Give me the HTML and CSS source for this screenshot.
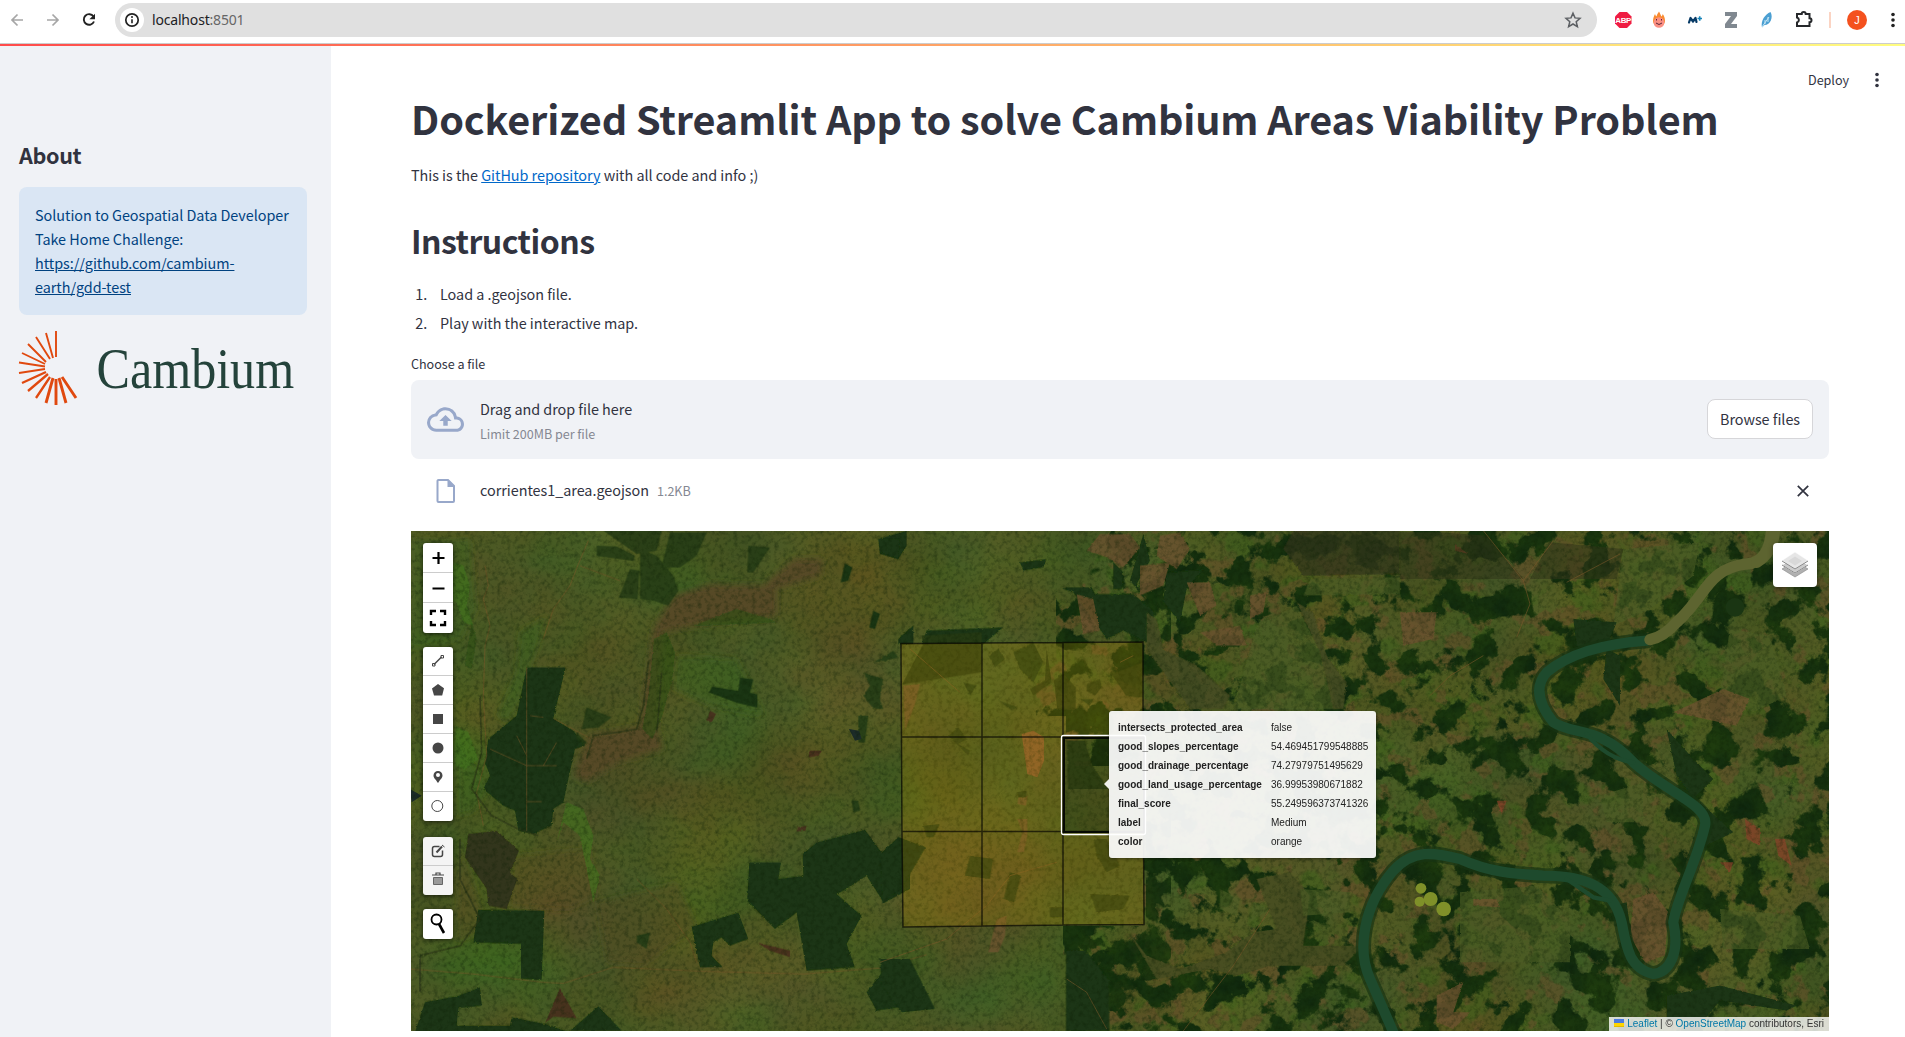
FILE: index.html
```html
<!DOCTYPE html>
<html lang="en">
<head>
<meta charset="utf-8">
<title>Cambium Areas Viability</title>
<link rel="stylesheet" href="styles.css">
</head>
<body>
<header class="browser">
  <svg class="nav-icons" width="108" height="40" viewBox="0 0 108 40">
    <g fill="none" stroke="#a6a6a6" stroke-width="1.7"><path d="M23 20H12M17.500 14.500L12 20l5.500 5.500M47 20h11M52.500 14.500L58 20l-5.500 5.500"/></g>
    <path d="M93.500 16.500A5.300 5.300 0 1 0 94 21.500" fill="none" stroke="#222" stroke-width="1.9"/><path d="M95 13.700v5.600h-5.600z" fill="#222"/>
  </svg>
  <div class="address">
    <span class="site-info"><svg width="16" height="16" viewBox="0 0 16 16"><circle cx="8" cy="8" r="6.200" fill="none" stroke="#222" stroke-width="1.700"/><path d="M8 7.200v4" stroke="#222" stroke-width="1.600"/><circle cx="8" cy="5" r="1" fill="#222"/></svg></span>
    <span class="url">localhost<i>:8501</i></span>
    <svg class="star" width="18" height="18" viewBox="0 0 18 18"><path d="M9 2.200l2 4.700 5 .4-3.800 3.400 1.200 5L9 13l-4.400 2.700 1.200-5L2 7.300l5-.4z" fill="none" stroke="#5c5f63" stroke-width="1.500"/></svg>
  </div>
  <svg class="extensions" width="301" height="40" viewBox="1604 0 301 40">
    <path d="M1619.500 12h7.500l4.500 4.500v7l-4.500 4.500h-7.500l-4.500-4.500v-7z" fill="#ef1c43"/>
    <text class="abp" x="1623.200" y="23" text-anchor="middle">ABP</text>
    <path d="M1653 21c0-3 1-5 2-7 .5 1.500 1 2 1.500 2.500.5-2 1.500-3.500 2.500-5 1 2 1.500 3 2.500 5 .8-.8 1-1.500 1.200-2.500 1.500 2 2.300 4 2.300 7a6 6 0 0 1-12 0z" fill="#f98a32"/>
    <circle cx="1659" cy="22.500" r="5.300" fill="#fb8f83"/><path d="M1656 23q3 3 6 0M1656.500 19v1.500M1661.500 19v1.500" stroke="#5a2638" fill="none"/>
    <path d="M1689 22.500l1.500-4.500 2.500 3.500 2.500-3.500 1 4" fill="none" stroke="#073a66" stroke-width="2.200" stroke-linejoin="round" stroke-linecap="round"/><path d="M1697.500 18.500h4.500M1699.700 16.300v4.500" stroke="#1583b8" stroke-width="1.600"/>
    <path d="M1725 12h12v4l-6 8h6v4h-12v-4l6-8h-6z" fill="#808890"/>
    <path d="M1762 27.500c-1.500-7 3-13 8.500-15.500 3 5 0 13-6 13z" fill="#4b9fd2"/><path d="M1762 27l7-10M1765 20v4M1768 17v5" stroke="#c5e6f4"/>
    <path d="M1798 14h3.700a2 2 0 0 1 4 0h3.800v4.200a2 2 0 0 1 0 4V26H1797v-3.500a2.600 2.600 0 0 0 0-5V14z" fill="none" stroke="#26282b" stroke-width="2"/>
    <path d="M1830 12v16" stroke="#fbd4c3" stroke-width="2"/>
    <circle cx="1857" cy="20" r="10" fill="#f4511e"/><text class="avatar-letter" x="1857" y="24.200" text-anchor="middle">J</text>
    <g fill="#222"><circle cx="1893" cy="14.500" r="1.800"/><circle cx="1893" cy="20" r="1.800"/><circle cx="1893" cy="25.500" r="1.800"/></g>
  </svg>
</header>
<div class="decoration"></div>
<div class="app">
  <aside class="sidebar">
    <h3>About</h3>
    <div class="info">Solution to Geospatial Data Developer Take Home Challenge: <a>https://github.com/cambium-earth/gdd-test</a></div>
    <svg class="logo" width="288" height="76" viewBox="0 0 288 76">
      <g stroke="#e0490f" stroke-width="1.900">
        <path d="M37 1v26M27 3l7 25M17 7l14 22M9 14l18 18M3 23l23 11M0 32.500l26 4M0 43l26-4" />
        <path stroke-width="2.300" d="M3 53l24-11M9 61l20-17M17 68l14-21"/>
        <path stroke-width="2.900" d="M27 73l7-25M37 75V49M47 73l-7-25M57 68L43 47"/>
      </g>
      <text transform="translate(77.500 58) scale(.895 1)">Cambium</text>
    </svg>
  </aside>
  <main class="main">
    <div class="toolbar"><span>Deploy</span><svg width="6" height="16" viewBox="0 0 6 16" fill="#31333f"><circle cx="3" cy="2.500" r="1.800"/><circle cx="3" cy="8" r="1.800"/><circle cx="3" cy="13.500" r="1.800"/></svg></div>
    <h1>Dockerized Streamlit App to solve Cambium Areas Viability Problem</h1>
    <p class="lead">This is the <a>GitHub repository</a> with all code and info ;)</p>
    <h2>Instructions</h2>
    <ol><li>Load a .geojson file.</li><li>Play with the interactive map.</li></ol>
    <div class="label">Choose a file</div>
    <section class="dropzone">
      <svg width="37" height="37" viewBox="0 0 24 24" fill="#98a8ca"><path d="M19.350 10.040A7.490 7.490 0 0 0 12 4C9.110 4 6.600 5.640 5.350 8.040A5.994 5.994 0 0 0 0 14c0 3.310 2.690 6 6 6h13c2.760 0 5-2.240 5-5 0-2.640-2.050-4.780-4.650-4.960zM19 18H6c-2.210 0-4-1.790-4-4 0-2.050 1.530-3.760 3.560-3.970l1.070-.11.500-.950A5.469 5.469 0 0 1 12 6c2.620 0 4.880 1.860 5.390 4.430l.3 1.500 1.530.11A2.980 2.980 0 0 1 22 15c0 1.650-1.350 3-3 3zM8 13h2.550v3h2.900v-3H16l-4-4z"/></svg>
      <div class="drop-text"><div>Drag and drop file here</div><small>Limit 200MB per file</small></div>
      <button>Browse files</button>
    </section>
    <div class="file-row">
      <svg width="20" height="26" viewBox="0 0 20 26"><path d="M2.500 2H12l6 6v15a1 1 0 0 1-1 1H2.500a1 1 0 0 1-1-1V3a1 1 0 0 1 1-1z" fill="none" stroke="#98a8ca" stroke-width="2"/><path d="M11.500 1.500V9H19z" fill="#98a8ca"/></svg>
      <span class="file-name">corrientes1_area.geojson</span><small>1.2KB</small>
      <svg class="remove" width="12" height="12" viewBox="0 0 12 12"><path d="M.8.800l10.400 10.400M11.200.800L.8 11.200" stroke="#31333f" stroke-width="1.700"/></svg>
    </div>
    <div class="map">
      <svg class="terrain" width="1418" height="500" viewBox="0 0 1418 500">
        <defs>
          <filter id="tone" x="0" y="0" width="100%" height="100%" color-interpolation-filters="sRGB"><feTurbulence type="fractalNoise" baseFrequency=".008 .01" numOctaves="6" seed="4"/><feColorMatrix values=".17 0 0 0 .215  0 .11 0 0 .29  0 0 .06 0 .105  0 0 0 0 1"/></filter>
          <filter id="grain" x="0" y="0" width="100%" height="100%" color-interpolation-filters="sRGB"><feTurbulence type="fractalNoise" baseFrequency=".22" numOctaves="3" seed="9"/><feColorMatrix values="0 0 0 0 .05  0 0 0 0 .12  0 0 0 0 .02  1.8 0 0 0 -.8"/></filter>
          <filter id="woods" x="0" y="0" width="100%" height="100%" color-interpolation-filters="sRGB"><feTurbulence type="fractalNoise" baseFrequency=".034" numOctaves="5" seed="21"/><feColorMatrix values="0 .1 0 0 .04  0 .13 0 0 .13  0 0 0 0 .055  14 0 0 0 -7.200"/></filter>
          <filter id="clay" x="0" y="0" width="100%" height="100%" color-interpolation-filters="sRGB"><feTurbulence type="fractalNoise" baseFrequency=".04" numOctaves="4" seed="37"/><feColorMatrix values="0 0 0 0 .4  0 0 0 0 .31  0 0 0 0 .17  0 12 0 0 -7"/></filter>
          <filter id="meadow" x="0" y="0" width="100%" height="100%" color-interpolation-filters="sRGB"><feTurbulence type="fractalNoise" baseFrequency=".025" numOctaves="4" seed="15"/><feColorMatrix values="0 0 0 0 .23  0 0 0 0 .38  0 0 0 0 .1  0 0 8 0 -4.500"/></filter>
          <filter id="rough" x="-5%" y="-5%" width="110%" height="110%"><feTurbulence type="fractalNoise" baseFrequency=".12" numOctaves="2" seed="3"/><feDisplacementMap in="SourceGraphic" scale="7" xChannelSelector="R" yChannelSelector="G"/></filter>
          <filter id="soft"><feGaussianBlur stdDeviation="9"/></filter>
          <clipPath id="east"><path d="M700 0H1418V500H660V432H652V395H733V235H655V185H625L620 130H645V60H668Z"/></clipPath>
          <clipPath id="dense"><path d="M725 0L1100 0 1060 90 985 110 975 200 1120 180 1170 210 1310 330 1240 410 1200 430 1110 350 1000 330 960 480H665V395H735L735 290 790 260 750 165 700 100Z"/></clipPath>
        </defs>
        <rect width="1418" height="500" fill="#4e5b24"/>
        <rect width="1418" height="500" filter="url(#tone)"/>
        <g transform="translate(-1 -2) scale(.3333)">
          <g filter="url(#soft)">
            <path class="brown" d="M790 200L900 165 1060 170 1150 90 1240 90 1230 140 1100 180 1100 260 860 290 760 310 740 600 760 660 620 700 530 760 490 740 540 620 690 590 730 300Z"/>
            <path class="brown" d="M310 980L540 960 560 1100 480 1140 300 1130ZM560 1120L800 1060 860 1190 700 1310 590 1300ZM150 920L200 1100 230 1200 140 1240Z" opacity=".5"/>
            <path class="lush" d="M0 30H180L200 240 150 330 0 360ZM140 620L230 780 190 850 140 860ZM800 380L980 390 1060 560 900 530 790 480ZM330 310L410 260 360 420 330 520 290 580 260 560 320 430Z" opacity=".55"/>
          </g>
          <g filter="url(#rough)">
            <path class="grass" d="M130 100l30 10 20 60-10 60 20 60-30-10-20-60-20-10zM135 590l40 20 30 80-40 30-30-10zM470 820l50 20 30 80-10 70 30 50-20 80-20-100-20-100-50-40-20 60z"/>
            <path class="wet" d="M770 310l25 60-8 80-30 110-30 70-30-30 20-110 15-160zM850 290l130-50 100 30 20 10-210 10zM185 280l15 50-15 90-20-10 10-70z"/>
            <path class="forest" d="M350 415L467 415 430 568 490 605 525 650 495 660 475 750 460 820 430 840 425 890 370 915 325 905 315 845 280 830 220 780 240 740 225 700 235 630 320 560Z"/>
            <path class="forest" d="M205 1142L403 1145 395 1353 333 1350 333 1245 190 1240Z"/>
            <path class="soil" d="M175 915L260 905 327 965 300 1030 322 1050 290 1140 235 1130 230 1080 165 985Z"/>
            <path class="forest" d="M45 1420L145 1400 210 1375 215 1430 145 1438 140 1490 300 1490 305 1465 405 1485 480 1510 15 1510ZM480 1505L565 1432 635 1505Z"/>
            <path class="forest" d="M845 1193L985 1150 1015 1230 960 1250 935 1225 910 1240 905 1280 938 1315 870 1315Z"/>
            <path class="forest" d="M1018 1000L1113 1000 1105 1050 1180 1040 1178 975 1220 940 1365 902 1415 970 1465 925 1500 940 1500 1080 1422 1122 1370 1040 1310 1080 1280 1095 1355 1160 1310 1245 1335 1315 1190 1325 1160 1150 1095 1200 1012 1115Z"/>
            <path class="forest" d="M1405 30L1490 5 1490 50 1465 90 1410 75ZM1465 330L1500 300V345H1465ZM1370 1390L1440 1300 1500 1290V1430L1400 1445Z"/>
          </g>
          <path class="copse" d="M560 50l60 2 55 28-5 16-110-15zM580 5h175l-15 60-60 10zM780 10h110l-30 70-50 35-55 0zM660 120l28 5-5 85-56-5zM690 60l50 20 50 60 15 45-30 45-45-15-40-5zM1015 50l65 5-50 75h-18zM530 535l75 30-40 30-50 5z"/>
          <path class="forest" d="M1305 103l22 12-12 40-23 5zM1390 245l20 10-15 45-17-5zM897 490l10-17 78 13 5-40 40 5-10 40 22 5v40l-60-14z"/>
          <path class="copse" d="M1360 430l60 20-10 60 10 30-30 0-30-40 20-30zM1345 560l30 0-10 80-20 0zM1390 400l60-35 15 20-40 10zM680 1220l40-10-10 50-30-20zM1325 815l20 0 5 30-20 5zM500 610l30 30-10 10-20-20z" filter="url(#rough)"/>
          <path class="night" d="M1317 600l30 5 8 25-20 5zM0 780l35 20-30 20z"/>
          <path class="plum" d="M450 1378l50 90-70-5-25 20zM900 545l18 10-13 25-15-5zM1160 895l30-5-5 15-25 2zM1200 665l35 0-10 15-30 5zM1040 1240l100 25v20l-60-20z" filter="url(#rough)"/>
          <g fill="none" class="track">
            <path d="M535 35L505 105 480 170 430 240 400 330M510 110L630 155M225 110l10 60-15 40 20 80-15 60-5 150 10 180-30 110 20 100M0 1320l190 15 210 25 60 3 150-48 270 12 300 8 230-18 140-40M680 1050l90 90 70 100 20 60M350 415v490M240 660l110 50 90 0M430 568l110 60M350 818l45 0M360 560l40 5M320 620l30 60M440 640l-40 70"/>
          </g>
          <path fill="none" class="creek" filter="url(#rough)" d="M715 400l-15 130-20 70-60 10-70 10-20 70M755 430l-10 130-5 50M210 500l5 170-30 110 60 80 80 40 60 20M150 930l0 120 60 120-60 80-120 30 0 110"/>
        </g>
        <g clip-path="url(#east)"><rect x="610" width="808" height="500" filter="url(#meadow)" opacity=".5"/><rect x="610" width="808" height="500" filter="url(#clay)" opacity=".55"/><rect x="610" width="808" height="500" filter="url(#woods)"/></g>
        <g clip-path="url(#dense)"><rect x="640" width="700" height="500" filter="url(#woods)" transform="translate(1400 25) scale(-1 1)" opacity=".9"/></g>
        <g transform="translate(469 -2) scale(.3333)">
          <g filter="url(#rough)">
            <path class="forest" d="M0 30l60 0-5 60-55-20zM420 100l80-10-10 25-60 10zM60 325l40-35 0 55h-40zM140 305l230-10-60 50H125zM560 175l75 0 10 20 115 0 60 50 10 110-100-50-50 25-40-60-60-80-30-10zM700 100l30 30-5 50h-25zM790 15l20 80-40 70 30 50-50-60zM860 130l110-10-50 60-20 100-50-60z"/>
            <path class="soil" d="M1240 5h320v130l-290 5-60-80z" opacity=".75"/>
            <path class="clay" d="M660 15l90 0 30 40-50 60-50-30-60-20zM840 20l60-10 30 50-40 60-60-40zM780 110l90-10-20 70-70 30zM920 160l70 0 20 70-50 30zM590 195l50 15 20 95-50 10zM960 310l120-20 20 60-90 0zM1110 200l50-10-10 60-40 20z"/>
            <path class="field" d="M1290 150l270-5v50l-290 5zM1130 290l120-60 90 180 30 130-310 0z"/>
            <path class="valley" d="M800 250l30 20 20 90 100 50 100 90-20 40-100 0-130-180zM1250 220l50 30 40 130 60 80-10 80-30 0-40-170z"/>
          </g>
          <path class="wood-field" d="M125 320L305 310 305 430 66 467 130 345ZM522 453l30-18 35 40 0 66-55 0zM695 435l93-35v105l-20 0-30-5zM620 465l40-15 5 25-20 25-25-15zM500 360l15 100-55 40-10-20 45-25z"/>
          <path class="copse" filter="url(#rough)" d="M325 380l30-20 20 30-30 25zM400 370l60-30 30 60-30 60-40-40zM250 460l40 10-20 30zM355 515l60 20-20 10zM600 510l40 0-10 20z"/>
        </g>
        <g transform="translate(469 88) scale(.3333)">
          <path class="forest" d="M0 710l55-55 82 30-70 120-60 50zM0 1020l90 0 75 150-100 10-60-80zM558 995l60 0 70 90 0 150H558z" filter="url(#rough)"/>
          <path class="clay-lake" d="M425 345l35-10 32 20 0 70-20 50-30-10z"/><path class="clay" d="M415 535l28-5-5 30-25-5zM412 600l30 0 0 50-10 50-20 0 15-60zM350 900l30-10-5 60-20 50-30 0zM70 200l50-5-15 60-30 80z"/>
          <path class="wood-field" d="M205 350l30-25 25 35-25 15 35 20-5 15zM560 365l55 0 20 70 50 75-120 0zM270 710l70 10-10 60-75-10zM390 760l33 10-20 80-32-10zM630 825l120 5-20 40-80 10zM510 865h40v30h-40zM410 520l30-5 0 20-25 0zM640 660l40 0 40 80-40 20-30-50zM130 620l50-5-20 40-20 0z" filter="url(#rough)"/>
          <path class="valley" d="M740 930l60 80 100 40 140-50 80-60 70-10-60-150 100-20 60 70-20 150 180 0-60 60-220 0-100 30-80-20-160 30z" filter="url(#rough)"/>
          <path class="field" d="M1020 810l60 30-10 50-50-20zM1260 810l150 10 0 60-140 10zM1120 850l50 20-60 40z"/>
          <path class="track" fill="none" d="M1170 870L1060 1040 910 1236M0 1030l200-70 120-100 70-90 140-40M560 1080l60 40 60 110M720 130l40-20M90 90l150 130"/>
        </g>
        <g transform="translate(989 -2) scale(.3333)">
          <g filter="url(#rough)">
            <path class="field" d="M670 60l230-20-20 100-130 100-110 50zM990 300l120 20 50 180-100 50-100-60zM600 800l130-40 0 120-110 0zM180 1090l230-20 100 100 0 130-330 0zM960 1140l240 20 30 100-260 0z"/>
            <path class="clay" d="M700 1110l60-20 45 60-10 130-60 20-45-80zM820 550l150-70 80 30-40 80zM0 250l110 0-10 80-90 20zM110 1400l80-40-30 90 50 0-50 50-50-20zM220 1110l70 0 10 25-80-5z" opacity=".7"/>
            <path class="red" d="M1035 870l45 30 0 50-40-20zM1125 930l30 0 20 80-40-30zM960 1000l40 0-10 30zM165 45l40 30-40-10zM290 815l30 0-15 40z"/>
            <path class="forest" d="M520 270l130 10-20 50 70 0-120 40-50-20zM620 360l40 20 0 150-50-80zM800 600l80 90 60 60-60 60-50-70zM900 820l100 90-80 40zM680 1120l20 150 50 60-50-20-60-180zM800 1400l160-30 230 60-30 15-200-30-50 60-110 0z"/>
          </g>
          <path class="soil" d="M0 10h120l140 10 110 130-60 0-310 0zM450 40l220 20-20 90-200 0-60 0z" opacity=".55"/>
        </g>
        <rect width="1418" height="500" filter="url(#grain)" opacity=".5"/>
        <g transform="translate(989 -2) scale(.3333)">
          <g fill="none" stroke-linecap="round" stroke-linejoin="round">
            <path class="bank" d="M740 335C600 345 500 380 440 430 400 475 420 530 460 580 520 620 600 590 700 700 800 790 930 830 915 890 890 1000 830 1110 820 1180 840 1270 810 1330 760 1335 690 1320 680 1260 665 1180 640 1070 550 1040 430 1040 340 1035 270 1030 180 990 100 970 40 960-20 1025-110 1130-130 1260-90 1350L-20 1510"/>
            <path class="river" d="M740 335C600 345 500 380 440 430 400 475 420 530 460 580 520 620 600 590 700 700 800 790 930 830 915 890 890 1000 830 1110 820 1180 840 1270 810 1330 760 1335 690 1320 680 1260 665 1180 640 1070 550 1040 430 1040 340 1035 270 1030 180 990 100 970 40 960-20 1025-110 1130-130 1260-90 1350L-20 1510"/>
            <path class="river thin" d="M560 615Q620 690 700 700M500 1050l80 55 50 10"/>
            <path class="sandbar" d="M1115 0Q1110 100 1040 105C920 120 920 200 830 280Q790 325 750 332"/>
            <path class="sandbar" d="M1124 0Q1120 70 1070 100" />
          </g>
          <g fill="#7f9029"><circle cx="63" cy="1078" r="16"/><circle cx="92" cy="1110" r="21"/><circle cx="59" cy="1118" r="15"/><circle cx="131" cy="1140" r="22"/></g>
          <circle cx="1005" cy="235" r="28" class="forest"/>
          <path class="track" fill="none" d="M250 5l120 150 90-120M370 155l20 70-40 100M90 500l60-60 100-60M500 160l160-85"/>
        </g>
        <g class="cells">
          <path d="M490 112.500L571 112V206H490.500ZM571 112L652 111.500V206H571ZM652 111.500L732 111V206H652ZM490.500 206H571V300.500H491ZM571 206H652V300.500H571ZM491 300.500H571V395L492 396ZM571 300.500H652V394L571 395ZM652 300.500H732.500L733 393.500L652 394Z"/>
          <path class="cell-focus" d="M652 206H733V301H652Z"/><path class="cell-inner" d="M653 207H733V301H653Z"/>
          <rect class="cell-outline" x="650.500" y="204.500" width="84" height="99" rx="2"/>
        </g>
      </svg>
      <div class="controls">
        <div class="bar">
          <span><svg viewBox="0 0 30 30"><path d="M9.500 15h12M15.500 9v12" stroke="#000" stroke-width="2.200"/></svg></span>
          <span><svg viewBox="0 0 30 30"><path d="M9.500 15.500h12" stroke="#000" stroke-width="2.200"/></svg></span>
          <span><svg viewBox="0 0 30 30"><path d="M8 12V8h5M17 8h5v4M8 18v4h5M17 22h5v-4" fill="none" stroke="#000" stroke-width="2.400"/></svg></span>
        </div>
        <div class="bar draw">
          <span><svg viewBox="0 0 30 30" fill="none" stroke="#464646"><path d="M11 18.500L18.500 11" stroke-width="1.400"/><path d="M9.500 17.500h2.500V20H9.500zM18 9.500h2.500V12H18z"/></svg></span>
          <span><svg viewBox="0 0 30 30"><path d="M15 9l6 4.200-1.800 7.300H11L9 13.500z" fill="#464646"/></svg></span>
          <span><svg viewBox="0 0 30 30"><path d="M10 10h10v10H10z" fill="#464646"/></svg></span>
          <span><svg viewBox="0 0 30 30"><circle cx="15" cy="15" r="5.500" fill="#464646"/></svg></span>
          <span><svg viewBox="0 0 30 30"><path d="M15 21c-2-3.500-4.500-5-4.500-7.600a4.500 4.500 0 0 1 9 0C19.500 16 17 17.500 15 21z" fill="#464646"/><circle cx="15" cy="13" r="2" fill="#fff"/></svg></span>
          <span><svg viewBox="0 0 30 30"><circle cx="14.300" cy="15" r="5.500" fill="none" stroke="#464646"/></svg></span>
        </div>
        <div class="bar draw disabled">
          <span><svg viewBox="0 0 30 30" fill="none" stroke="#464646"><path d="M16.500 10.500h-5a2 2 0 0 0-2 2v6a2 2 0 0 0 2 2h6a2 2 0 0 0 2-2v-4" stroke-width="1.500"/><path d="M13.500 16.500l5.500-6" stroke-width="2"/><path d="M19 9l2.500 2"/></svg></span>
          <span><svg viewBox="0 0 30 30"><path d="M10.500 12.500h9v7h-9z" fill="#999" stroke="#666"/><path d="M9 10h12M13 9.500V8h4v1.500" stroke="#464646" fill="none" stroke-width="1.200"/></svg></span>
        </div>
        <div class="bar"><span><svg viewBox="0 0 30 30" fill="none" stroke="#000"><circle cx="13.500" cy="10.500" r="5" stroke-width="1.800"/><path d="M16 15l5 9" stroke-width="2.600"/></svg></span></div>
      </div>
      <div class="layers"><svg width="28" height="28" viewBox="0 0 28 28"><path d="M1 18l13 8 13-8-13-8z" fill="#b0b0b0" stroke="#888" stroke-width=".6"/><path d="M1 14l13 8 13-8-13-8z" fill="#ccc" stroke="#fff"/><path d="M1 14l13 8 13-8" fill="none" stroke="#888"/><path d="M1 9.500L14 1l13 8.500-13 8.500z" fill="#e6e6e6" stroke="#fff" stroke-width=".6"/><path d="M1 10l13 8 13-8" fill="none" stroke="#888"/><path d="M7 10l7-4.500 7 4.500-7 4.500z" fill="#d8d8d8"/></svg></div>
      <table class="tip">
        <tr><th>intersects_protected_area</th><td>false</td></tr>
        <tr><th>good_slopes_percentage</th><td>54.469451799548885</td></tr>
        <tr><th>good_drainage_percentage</th><td>74.27979751495629</td></tr>
        <tr><th>good_land_usage_percentage</th><td>36.99953980671882</td></tr>
        <tr><th>final_score</th><td>55.249596373741326</td></tr>
        <tr><th>label</th><td>Medium</td></tr>
        <tr><th>color</th><td>orange</td></tr>
      </table>
      <div class="attribution"><svg width="10" height="8" viewBox="0 0 10 8"><path d="M0 0h10v4H0z" fill="#4c7be1"/><path d="M0 4h10v3H0z" fill="#ffd500"/><path d="M0 7h10v1H0z" fill="#e0bc00"/></svg> <a>Leaflet</a> | © <a>OpenStreetMap</a> contributors, Esri</div>
    </div>
  </main>
</div>
</body>
</html>
```
FILE: styles.css
```css
* { box-sizing: border-box; }
body { margin: 0; height: 1037px; overflow: hidden; background: #fff; color: #31333f; font: 14.4px/24px "Noto Sans CJK SC", sans-serif; letter-spacing: -.03px; }
svg { display: block; }
h1, h2, h3, p, ol { margin: 0; padding: 0; }

.browser { display: flex; height: 43px; align-items: flex-start; background: #fff; }
.address { display: flex; align-items: center; width: 1482px; height: 34px; margin: 3px 0 0 7px; padding: 0 15px 0 5px; border-radius: 17px; background: #e0e0e0; }
.nav-icons { flex: none; }
.site-info { display: flex; align-items: center; justify-content: center; width: 24px; height: 24px; border-radius: 50%; background: #fff; }
.url { margin-left: 8px; font: 14px/24px "Noto Sans", sans-serif; letter-spacing: -.18px; color: #202124; }
.url i { font-style: normal; color: #666; }
.star { margin-left: auto; }
.extensions { margin-left: auto; flex: none; }
.abp { font: bold 8px "Liberation Sans", sans-serif; letter-spacing: -.4px; fill: #fff; }
.avatar-letter { font: 11px "Liberation Sans", sans-serif; fill: #fff; }
.decoration { height: 3px; border-top: 1px solid #ccc; background: linear-gradient(90deg, #ff4b4b, #fffd80) padding-box; }

.app { display: flex; height: 991px; }
.sidebar { flex: none; width: 331px; padding: 91px 24px 0 19px; background: #f0f2f6; }
h3 { font-size: 21.600px; line-height: 36px; font-weight: 600; letter-spacing: -.35px; }
.info { width: 288px; height: 128px; margin-top: 14px; padding: 16px; border-radius: 8px; background: #dae6f4; color: #004280; }
.info a, .lead a { text-decoration: underline; }
.logo { margin-top: 15px; overflow: visible; }
.logo text { font: 56px "Liberation Serif", serif; letter-spacing: 0; fill: #24433b; }

.main { flex: 1; padding: 0 76px 0 80px; }
.toolbar { display: flex; height: 36px; padding-top: 32px; margin-right: -51px; justify-content: flex-end; align-items: center; font-size: 12.600px; gap: 25px; }
h1 { height: 74px; margin-top: -1px; font-size: 39.600px; line-height: 74px; font-weight: 700; letter-spacing: -.11px; white-space: nowrap; }
.lead { margin-top: 8px; }
.lead a { color: #0068c9; }
h2 { margin-top: 31px; font-size: 32px; line-height: 44px; font-weight: 600; letter-spacing: -.55px; }
ol { margin: 20px 0 0 29px; }
li { height: 29px; line-height: 24px; padding-left: 0; }
li::marker { content: counter(list-item) ".\00a0\00a0\00a0\00a0"; }
.label { margin-top: 12px; font-size: 12.600px; line-height: 24px; }
.dropzone { display: flex; align-items: center; height: 79px; margin-top: 4px; padding: 0 16px 1px; border-radius: 8px; background: #f0f2f6; }
.drop-text { margin-left: 16px; padding-top: 2px; }
.drop-text div { line-height: 27px; }
small { display: block; font-size: 12.600px; line-height: 24px; color: #858892; }
button { margin-left: auto; width: 106px; height: 40px; padding: 0; border: 1px solid #d6d6d9; border-radius: 8px; background: #fff; color: #31333f; font: inherit; letter-spacing: inherit; }
.file-row { display: flex; align-items: center; height: 72px; padding: 0 20px 8px 25px; }
.file-name { margin: 0 8px 2px 24px; }
.file-row small { margin-bottom: 1px; }
.remove { margin-left: auto; }

.map { position: relative; width: 1418px; height: 500px; overflow: hidden; font-family: "Liberation Sans", Arial, sans-serif; letter-spacing: 0; }
.forest { fill: #1a3513; }
.copse { fill: #243b15; opacity: .85; }
.soil { fill: #32351a; }
.brown { fill: #574a26; }
.lush { fill: #3c611c; }
.grass { fill: #41711f; opacity: .65; }
.wet { fill: #2c5017; opacity: .6; }
.night { fill: #1c2b28; }
.plum { fill: #46281c; opacity: .75; }
.clay { fill: #6b522e; opacity: .8; }
.clay-lake { fill: #82592f; }
.field { fill: #4d5e26; opacity: .65; }
.valley { fill: #474d22; opacity: .9; }
.red { fill: #86412a; opacity: .75; }
.wood-field { fill: #273a13; opacity: .85; }
.track { stroke: #79582a; stroke-width: 3px; opacity: .6; }
.creek { stroke: #2b3516; stroke-width: 5px; opacity: .7; }
.bank { stroke: #173313; stroke-width: 46px; opacity: .7; }
.river { stroke: #1e4a2d; stroke-width: 31px; }
.thin { stroke-width: 13px; }
.sandbar { stroke: #5d6430; stroke-width: 34px; }
.cells { fill: rgb(205 150 0 / 20%); stroke: rgb(0 0 0 / 65%); stroke-width: 1.500px; }
.cell-focus { fill: rgb(60 60 0 / 20%); stroke: none; }
.cell-inner { fill: none; stroke: #050802; stroke-width: 2px; }
.cell-outline { fill: none; stroke: #fff; stroke-width: 1.300px; }

.controls { position: absolute; left: 12px; top: 12px; display: grid; gap: 14px; }
.bar { width: 30px; border-radius: 3px; background: #fff; box-shadow: 0 1px 5px rgb(0 0 0 / 65%); overflow: hidden; }
.bar + .bar + .bar { margin-top: 2px; }
.bar + .bar + .bar + .bar { margin-top: 0; }
.bar span { display: block; height: 30px; border-bottom: 1px solid #ccc; }
.bar span:last-child { border: 0; }
.bar svg { width: 30px; height: 30px; }
.draw svg { margin-top: -1px; }
.bar.disabled { background: #f4f4f4; }
.layers { position: absolute; right: 12px; top: 12px; display: grid; place-items: center; width: 44px; height: 44px; border-radius: 4px; background: #fff; box-shadow: 0 1px 5px rgb(0 0 0 / 40%); }
.tip { position: absolute; left: 698px; top: 180px; width: 267px; height: 147px; padding: 7px 6px 7px 9px; border-spacing: 0; border-radius: 3px; background: rgb(255 255 255 / 92%); box-shadow: 0 1px 3px rgb(0 0 0 / 40%); color: #222; font-size: 10px; line-height: 19px; }
.tip::before { content: ""; position: absolute; left: -5px; top: 68px; border: 5px solid transparent; border-left: 0; border-right-color: rgb(255 255 255 / 92%); }
.tip th, .tip td { padding: 0; height: 19px; text-align: left; }
.tip th { width: 153px; }
.attribution { position: absolute; right: 0; bottom: 0; height: 14px; padding: 0 5px; background: rgb(255 255 255 / 80%); color: #333; font-size: 10px; line-height: 13px; white-space: nowrap; }
.attribution svg { display: inline-block; }
.attribution a { color: #0078a8; }
```
